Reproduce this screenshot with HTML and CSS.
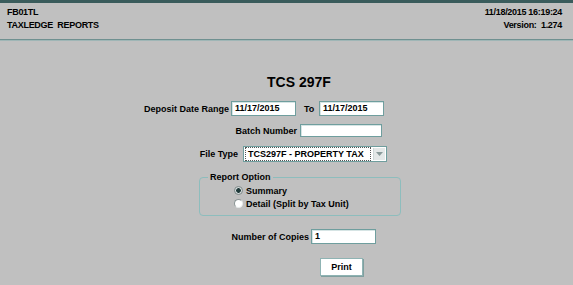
FILE: index.html
```html
<!DOCTYPE html>
<html>
<head>
<meta charset="utf-8">
<title>TaxLedge Reports</title>
<link rel="stylesheet" href="styles.css">
</head>
<body>
<div class="titlebar"></div>
<header class="header">
  <div class="hleft">
    <div class="hline">FB01TL</div>
    <div class="hline">TAXLEDGE&nbsp; REPORTS</div>
  </div>
  <div class="hright">
    <div class="hline">11/18/2015 16:19:24</div>
    <div class="hline">Version:&nbsp; 1.274</div>
  </div>
</header>
<main class="main">
  <h1 class="title">TCS 297F</h1>
  <div class="row row-dates">
    <label class="lab lab-dates">Deposit Date Range</label>
    <div class="field w65">11/17/2015</div>
    <span class="to">To</span>
    <div class="field w65">11/17/2015</div>
  </div>
  <div class="row row-batch">
    <label class="lab lab-batch">Batch Number</label>
    <div class="field small w82"></div>
  </div>
  <div class="row row-type">
    <label class="lab lab-type">File Type</label>
    <div class="select">
      <span class="seltext">TCS297F - PROPERTY TAX</span>
      <span class="selbtn">
        <svg width="7" height="4" viewBox="0 0 7 4"><path d="M0 0 L7 0 L3.5 4 Z" fill="#8a9a9a"/></svg>
      </span>
    </div>
  </div>
  <fieldset class="options">
    <legend class="legend">Report Option</legend>
    <div class="opt"><span class="radio checked"></span><span>Summary</span></div>
    <div class="opt"><span class="radio"></span><span>Detail (Split by Tax Unit)</span></div>
  </fieldset>
  <div class="row row-copies">
    <label class="lab lab-copies">Number of Copies</label>
    <div class="field w65">1</div>
  </div>
  <div class="row row-print">
    <button class="btn">Print</button>
  </div>
</main>
</body>
</html>
```
FILE: styles.css
```css
html, body {
  margin: 0;
  padding: 0;
}
body {
  width: 573px;
  height: 285px;
  overflow: hidden;
  background: #c0c0c0;
  font-family: "Liberation Sans", Arial, sans-serif;
  font-weight: bold;
  font-size: 9px;
  color: #000;
}
.titlebar {
  height: 3px;
  background: #3a5c5c;
}
.header {
  height: 37px;
  box-sizing: border-box;
  display: flex;
  justify-content: space-between;
  padding: 3px 11px 0 7px;
  border-bottom: 1px solid #6f9090;
  letter-spacing: -0.3px;
}
.hline {
  height: 13px;
  line-height: 13px;
}
.hright {
  text-align: right;
}
.main {
  border-top: 1px solid #9fb6b6;
  padding-top: 33px;
}
.title {
  margin: 0 0 11px 267px;
  font-size: 14px;
  line-height: 16px;
  height: 16px;
  font-weight: bold;
  color: #000;
}
.row {
  display: flex;
  align-items: center;
}
.lab {
  text-align: right;
  white-space: nowrap;
}
.lab-dates { width: 229px; margin-right: 2px; }
.lab-batch { width: 297px; margin-right: 3px; }
.lab-type { width: 238px; margin-right: 5px; }
.lab-copies { width: 309px; margin-right: 2px; }
.field {
  box-sizing: border-box;
  height: 15px;
  background: #fff;
  border: 1px solid #6f9e9e;
  box-shadow: inset 1px 1px 0 #d6e4e4;
  padding-left: 3px;
  line-height: 13px;
  color: #000;
}
.field.small { height: 13px; }
.w65 { width: 65px; }
.w82 { width: 82px; }
.to {
  margin-left: 8px;
  margin-right: 4px;
  width: 11px;
}
.row-batch { margin-top: 8px; }
.row-type { margin-top: 9px; }
.select {
  box-sizing: border-box;
  width: 144px;
  height: 16px;
  background: #fff;
  border: 1px solid #6f9e9e;
  display: flex;
  align-items: center;
  padding: 1px;
}
.seltext {
  flex: 1;
  height: 12px;
  line-height: 12px;
  border: 1px dotted #555;
  padding-left: 2px;
  margin-right: 2px;
  color: #000;
}
.selbtn {
  width: 11px;
  height: 12px;
  background: #e4e8e8;
  border-left: 1px solid #cfd8d8;
  display: flex;
  align-items: center;
  justify-content: center;
}
.options {
  box-sizing: border-box;
  margin: 10px 0 0 199px;
  width: 202px;
  height: 44px;
  border: 1px solid #8dbdbd;
  border-radius: 4px;
  padding: 2px 0 0 34px;
}
.legend {
  padding: 0 2px;
  margin-left: -26px;
  line-height: 10px;
}
.opt {
  display: flex;
  align-items: center;
  height: 13px;
  gap: 3px;
}
.radio {
  box-sizing: border-box;
  width: 9px;
  height: 9px;
  border-radius: 50%;
  background: #fff;
  border: 1px solid #8a9494;
  border-right-color: #e6eaea;
  border-bottom-color: #e6eaea;
}
.radio.checked {
  background: radial-gradient(circle, #1f3a3a 0 2px, #d4dada 2.6px);
  border-color: #7f8a8a;
}
.row-copies { margin-top: 13px; }
.row-print { margin-top: 14px; padding-left: 320px; }
.btn {
  box-sizing: border-box;
  width: 43px;
  height: 18px;
  padding: 0;
  background: #fff;
  border: 1px solid #8fb3b3;
  box-shadow: 1px 1px 0 #7f9f9f;
  font-family: inherit;
  font-weight: bold;
  font-size: 9px;
  color: #000;
}
```
